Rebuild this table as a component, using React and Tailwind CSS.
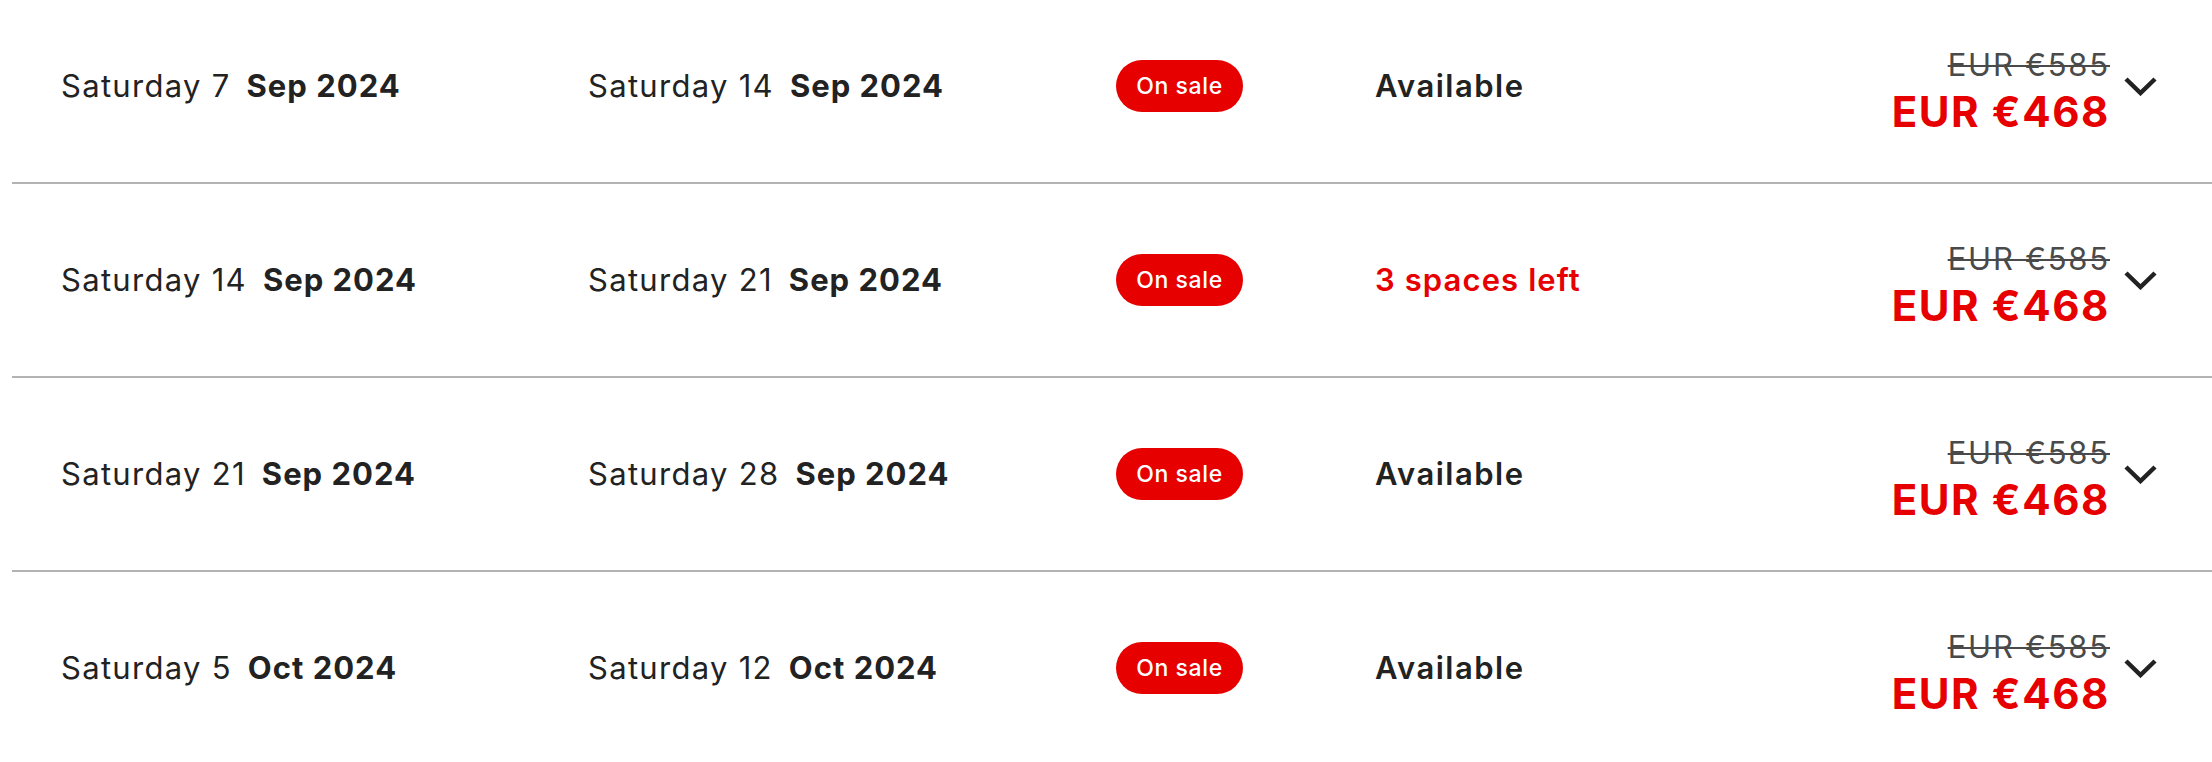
import React from 'react';

const rows = [
    { from: ['Saturday 7', 'Sep 2024'], to: ['Saturday 14', 'Sep 2024'], status: 'Available' },
    { from: ['Saturday 14', 'Sep 2024'], to: ['Saturday 21', 'Sep 2024'], status: '3 spaces left', low: true },
    { from: ['Saturday 21', 'Sep 2024'], to: ['Saturday 28', 'Sep 2024'], status: 'Available' },
    { from: ['Saturday 5', 'Oct 2024'], to: ['Saturday 12', 'Oct 2024'], status: 'Available' },
];

const DateCell = ({ day, month }) => (
    <div className="text-[31px] text-[#222222] whitespace-nowrap">
        <span className="font-normal tracking-[1.3px]">{day}</span>
        <span className="ml-[16px] font-bold tracking-[1px]">{month}</span>
    </div>
);

const Chevron = () => (
    <svg width="33" height="19" viewBox="0 0 33 19" fill="none">
        <polyline points="2,2 16.5,16 31,2" stroke="#222222" strokeWidth="4.5" strokeLinejoin="miter" />
    </svg>
);

const App = () => {
    return (
        <div className="w-[2212px] h-[762px] overflow-hidden bg-white font-['Inter',sans-serif]">
            <div className="ml-[12px] -mt-[10px]">
                {rows.map((row, i) => (
                    <div key={i} className="flex items-center h-[194px] border-b-2 border-[#b3b3b3] pl-[49px]">
                        <div className="w-[527px]">
                            <DateCell day={row.from[0]} month={row.from[1]} />
                        </div>
                        <div className="w-[528px]">
                            <DateCell day={row.to[0]} month={row.to[1]} />
                        </div>
                        <div className="w-[259px]">
                            <span className="inline-flex items-center justify-center w-[127px] h-[52px] rounded-full bg-[#e60000] text-white text-[23px] font-medium tracking-[0.6px]">
                                On sale
                            </span>
                        </div>
                        <div className={`flex-1 text-[31px] font-semibold ${row.low ? 'text-[#e60000] tracking-[1.1px]' : 'text-[#222222] tracking-[1.5px]'}`}>
                            {row.status}
                        </div>
                        <div className="flex flex-col items-end pt-[8px]">
                            <div className="text-[31px] leading-[44px] text-[#4a4a4a] tracking-[1.8px] line-through decoration-2">EUR €585</div>
                            <div className="text-[42px] leading-[50px] font-bold text-[#e60000] tracking-[1.6px]">EUR €468</div>
                        </div>
                        <div className="ml-[14px] mr-[55px] flex items-center">
                            <Chevron />
                        </div>
                    </div>
                ))}
            </div>
        </div>
    );
};

export default App;
